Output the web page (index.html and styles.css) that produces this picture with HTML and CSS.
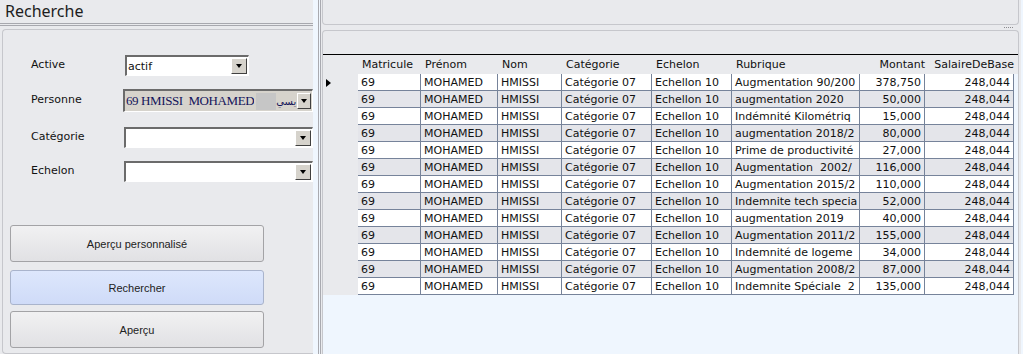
FILE: index.html
```html
<!DOCTYPE html>
<html lang="fr">
<head>
    <meta charset="UTF-8">
    <meta name="viewport" content="width=device-width, initial-scale=1.0">
    <title>Recherche</title>
    <link rel="stylesheet" href="styles.css">
</head>
<body>
    <div class="app">
        <aside class="search">
            <h1 class="search-title">Recherche</h1>
            <div class="search-panel">
                <div class="field">
                    <label>Active</label>
                    <div class="combo combo-short">
                        <span class="combo-text">actif</span>
                        <span class="combo-btn"></span>
                    </div>
                </div>
                <div class="field">
                    <label>Personne</label>
                    <div class="combo combo-locked">
                        <span class="combo-text person">69 HMISSI  MOHAMED</span>
                        <span class="person-mask"></span>
                        <span class="person-ar">يسي</span>
                        <span class="combo-btn"></span>
                    </div>
                </div>
                <div class="field">
                    <label>Catégorie</label>
                    <div class="combo">
                        <span class="combo-text"></span>
                        <span class="combo-btn"></span>
                    </div>
                </div>
                <div class="field">
                    <label>Echelon</label>
                    <div class="combo">
                        <span class="combo-text"></span>
                        <span class="combo-btn"></span>
                    </div>
                </div>

                <div class="actions">
                    <button class="btn">Aperçu personnalisé</button>
                    <button class="btn btn-active">Rechercher</button>
                    <button class="btn">Aperçu</button>
                </div>
            </div>
        </aside>

        <div class="divider"></div>

        <main class="results">
            <div class="results-top"></div>
            <div class="results-split"><span class="grip"></span></div>
            <div class="results-box">
                <div class="results-toolbar"></div>
                <div class="grid-wrap">
                    <table class="grid">
                        <colgroup>
                            <col style="width: 35px">
                            <col style="width: 63px">
                            <col style="width: 77px">
                            <col style="width: 64px">
                            <col style="width: 90px">
                            <col style="width: 80px">
                            <col style="width: 128px">
                            <col style="width: 65px">
                            <col style="width: 89px">
                        </colgroup>
                        <thead>
                            <tr>
                                <th></th>
                                <th>Matricule</th>
                                <th>Prénom</th>
                                <th>Nom</th>
                                <th>Catégorie</th>
                                <th>Echelon</th>
                                <th>Rubrique</th>
                                <th class="num">Montant</th>
                                <th class="num">SalaireDeBase</th>
                            </tr>
                        </thead>
                        <tbody>
                            <tr><td class="sel"><span class="marker"></span></td><td>69</td><td>MOHAMED</td><td>HMISSI</td><td>Catégorie 07</td><td>Echellon 10</td><td>Augmentation 90/200</td><td class="num">378,750</td><td class="num">248,044</td></tr>
                            <tr class="alt"><td class="sel"></td><td>69</td><td>MOHAMED</td><td>HMISSI</td><td>Catégorie 07</td><td>Echellon 10</td><td>augmentation 2020</td><td class="num">50,000</td><td class="num">248,044</td></tr>
                            <tr><td class="sel"></td><td>69</td><td>MOHAMED</td><td>HMISSI</td><td>Catégorie 07</td><td>Echellon 10</td><td>Indémnité Kilométriq</td><td class="num">15,000</td><td class="num">248,044</td></tr>
                            <tr class="alt"><td class="sel"></td><td>69</td><td>MOHAMED</td><td>HMISSI</td><td>Catégorie 07</td><td>Echellon 10</td><td>augmentation 2018/2</td><td class="num">80,000</td><td class="num">248,044</td></tr>
                            <tr><td class="sel"></td><td>69</td><td>MOHAMED</td><td>HMISSI</td><td>Catégorie 07</td><td>Echellon 10</td><td>Prime de productivité</td><td class="num">27,000</td><td class="num">248,044</td></tr>
                            <tr class="alt"><td class="sel"></td><td>69</td><td>MOHAMED</td><td>HMISSI</td><td>Catégorie 07</td><td>Echellon 10</td><td>Augmentation  2002/</td><td class="num">116,000</td><td class="num">248,044</td></tr>
                            <tr><td class="sel"></td><td>69</td><td>MOHAMED</td><td>HMISSI</td><td>Catégorie 07</td><td>Echellon 10</td><td>Augmentation 2015/2</td><td class="num">110,000</td><td class="num">248,044</td></tr>
                            <tr class="alt"><td class="sel"></td><td>69</td><td>MOHAMED</td><td>HMISSI</td><td>Catégorie 07</td><td>Echellon 10</td><td>Indemnite tech specia</td><td class="num">52,000</td><td class="num">248,044</td></tr>
                            <tr><td class="sel"></td><td>69</td><td>MOHAMED</td><td>HMISSI</td><td>Catégorie 07</td><td>Echellon 10</td><td>augmentation 2019</td><td class="num">40,000</td><td class="num">248,044</td></tr>
                            <tr class="alt"><td class="sel"></td><td>69</td><td>MOHAMED</td><td>HMISSI</td><td>Catégorie 07</td><td>Echellon 10</td><td>Augmentation 2011/2</td><td class="num">155,000</td><td class="num">248,044</td></tr>
                            <tr><td class="sel"></td><td>69</td><td>MOHAMED</td><td>HMISSI</td><td>Catégorie 07</td><td>Echellon 10</td><td>Indemnité de logeme</td><td class="num">34,000</td><td class="num">248,044</td></tr>
                            <tr class="alt"><td class="sel"></td><td>69</td><td>MOHAMED</td><td>HMISSI</td><td>Catégorie 07</td><td>Echellon 10</td><td>Augmentation 2008/2</td><td class="num">87,000</td><td class="num">248,044</td></tr>
                            <tr><td class="sel"></td><td>69</td><td>MOHAMED</td><td>HMISSI</td><td>Catégorie 07</td><td>Echellon 10</td><td>Indemnite Spéciale  2</td><td class="num">135,000</td><td class="num">248,044</td></tr>
                        </tbody>
                    </table>
                </div>
            </div>
        </main>
    </div>
</body>
</html>
```

FILE: styles.css
```css
* {
    box-sizing: border-box;
}
html, body {
    margin: 0;
    height: 100%;
}
body {
    background-color: #e9eaed;
    font-family: "DejaVu Sans", Verdana, sans-serif;
    font-size: 11px;
    color: #111;
    overflow: hidden;
}
.app {
    display: flex;
    width: 1023px;
    height: 354px;
}

/* Left search panel */
.search {
    width: 313px;
    display: flex;
    flex-direction: column;
    overflow: hidden;
}
.search-title {
    margin: 0;
    height: 26px;
    padding-left: 5px;
    font-family: "Noto Sans", sans-serif;
    font-size: 16px;
    font-weight: normal;
    line-height: 23px;
    color: #1d1d1d;
    border-bottom: 3px double #a7a8ae;
}
.search-panel {
    flex: 1;
    margin: 3px 0 0 2px;
    padding: 25px 0 0 28px;
    border: 1px solid #c6c7cc;
    border-right: none;
    border-radius: 4px 0 0 4px;
}
.field {
    display: flex;
    align-items: center;
    height: 21px;
    margin-bottom: 14px;
}
.field:nth-child(2) {
    margin-bottom: 16px;
}
.field:nth-child(3) {
    margin-bottom: 13px;
}
.field label {
    width: 94px;
    padding-bottom: 2px;
}
.combo {
    display: flex;
    align-items: center;
    width: 190px;
    height: 21px;
    background-color: #fff;
    border-top: 2px solid #6b6b6b;
    border-left: 2px solid #6b6b6b;
    border-bottom: 1px solid #fff;
    border-right: 1px solid #fff;
}
.combo-short {
    width: 124px;
}
.combo-locked {
    height: 23px;
    background-color: #d6d3cc;
}
.combo-text {
    flex: 1;
    padding-left: 1px;
    white-space: pre;
    overflow: hidden;
}
.combo-text.person {
    flex: none;
    font-family: "Liberation Serif", serif;
    font-size: 13px;
    letter-spacing: -0.4px;
    color: #14145a;
}
.person-mask {
    width: 24px;
    height: 17px;
    margin-left: 2px;
    background-color: #c6c6c6;
}
.person-ar {
    flex: 1;
    font-family: "DejaVu Sans", sans-serif;
    font-size: 10px;
    color: #14145a;
    text-align: right;
    padding-right: 1px;
}
.combo-btn {
    width: 16px;
    height: 16px;
    margin-right: 1px;
    display: flex;
    align-items: center;
    justify-content: center;
    background-color: #d6d3cc;
    border: 1px solid;
    border-color: #fff #404040 #404040 #fff;
}
.combo-btn::before {
    content: "";
    border-style: solid;
    border-width: 4px 3.5px 0;
    border-color: #000 transparent transparent;
}
.actions {
    display: flex;
    flex-direction: column;
    width: 254px;
    margin: 43px 0 0 -21px;
}
.btn {
    height: 37px;
    border: 1px solid #a3a3a6;
    border-radius: 3px;
    background: linear-gradient(#f1f1f2, #e1e1e4);
    font-family: "Liberation Sans", Arial, sans-serif;
    font-size: 11px;
    color: #222;
}
.btn-active {
    height: 35px;
    margin: 8px 0 6px;
    background: linear-gradient(#dde7fc, #cfdbf8);
    border-color: #a9b4cc;
}

/* Splitter */
.divider {
    width: 8px;
    background-color: #eff6fe;
    border-right: 3px double #a9aab0;
}

/* Results */
.results {
    flex: 1;
    display: flex;
    flex-direction: column;
    padding: 0 2px 0 1px;
    border-right: 2px solid #eff6fe;
}
.results-top {
    height: 25px;
    border: 1px solid #c6c7cc;
    border-top: none;
    border-radius: 0 0 4px 4px;
}
.results-split {
    height: 5px;
    display: flex;
    align-items: center;
    justify-content: flex-end;
    padding-right: 6px;
}
.grip {
    width: 9px;
    border-top: 1px dotted #8b8b8f;
}
.results-box {
    flex: 1;
    display: flex;
    flex-direction: column;
    border: 1px solid #c6c7cc;
    border-bottom: none;
    border-radius: 4px 4px 0 0;
}
.results-toolbar {
    height: 24px;
    border-bottom: 1px solid #000;
}
.grid-wrap {
    flex: 1;
    background: linear-gradient(#e9eaed 0 19px, #eff6fe 19px);
}
.grid {
    width: 691px;
    table-layout: fixed;
    border-collapse: separate;
    border-spacing: 0;
}
.grid th {
    height: 19px;
    padding: 0 0 0 4px;
    font-weight: normal;
    text-align: left;
    white-space: nowrap;
    background-color: #e9eaed;
}
.grid td {
    height: 17px;
    padding: 0 3px;
    border-right: 1px solid #76839a;
    border-bottom: 1px solid #76839a;
    background-color: #fff;
    white-space: pre;
    overflow: hidden;
}
.grid tr.alt td {
    background-color: #e4e5ea;
}
.grid .num {
    text-align: right;
    padding-right: 3px;
}
.grid th.num {
    padding-right: 0;
}
.grid td.sel,
.grid tr.alt td.sel {
    border: none;
    padding-left: 3px;
    background-color: #e9eaed;
}
.marker {
    display: block;
    width: 0;
    border-style: solid;
    border-width: 4px 0 4px 5px;
    border-color: transparent transparent transparent #000;
}
```
